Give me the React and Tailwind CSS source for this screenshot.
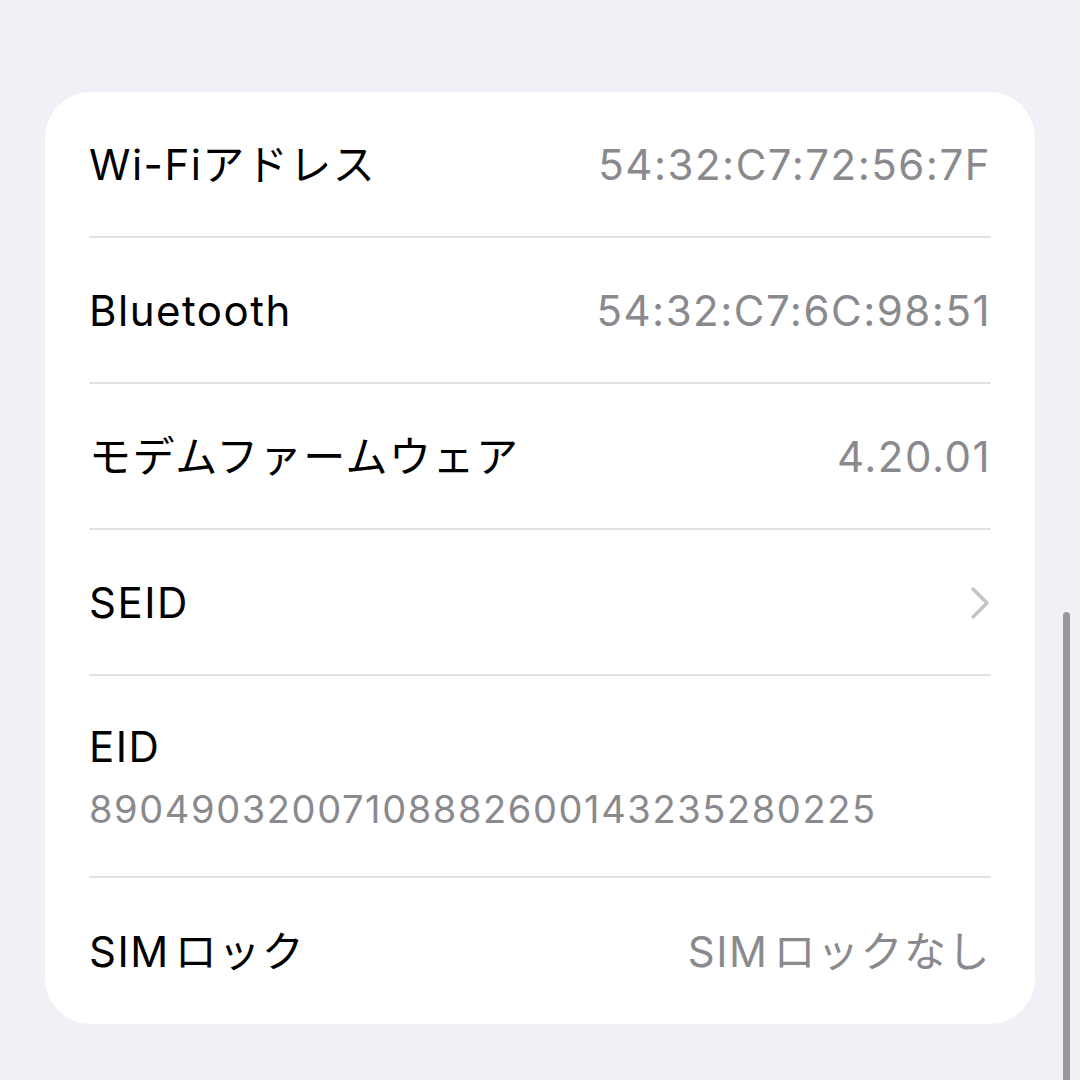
const rows = [
  { label: "Wi-Fiアドレス", value: "54:32:C7:72:56:7F" },
  { label: "Bluetooth", value: "54:32:C7:6C:98:51" },
  { label: "モデムファームウェア", value: "4.20.01" },
  { label: "SEID", chevron: true },
  { label: "EID", sub: "89049032007108882600143235280225" },
  { label: "SIMロック", value: "SIMロックなし" },
];

const withGap = (text) => {
  const m = text.match(/^(SIM)(.*)$/);
  if (!m) return text;
  return (
    <>
      {m[1]}
      <span className="ml-[5px]">{m[2]}</span>
    </>
  );
};

const Chevron = () => (
  <svg width="22" height="36" viewBox="0 0 22 36" fill="none">
    <path
      d="M4 4 L18 18 L4 32"
      stroke="#c4c4c7"
      strokeWidth="3.5"
      strokeLinecap="round"
      strokeLinejoin="round"
    />
  </svg>
);

export default function App() {
  return (
    <div
      className="relative w-[1080px] h-[1080px] overflow-hidden bg-[#f1f0f6] pt-[92px] pl-[45px] pr-[45px]"
      style={{ fontFamily: '"Inter", "Noto Sans CJK JP", sans-serif' }}
    >
      <div className="bg-white rounded-[46px] px-[44px] h-[932px]">
        {rows.map((row, i) => (
          <div
            key={row.label}
            className={
              (row.sub ? "h-[202px] " : "h-[146px] ") +
              (i < rows.length - 1 ? "border-b-2 border-[#e2e2e5] " : "") +
              "flex items-center justify-between pt-[1px]"
            }
          >
            {row.sub ? (
              <div className="flex flex-col">
                <span className="text-[42px] leading-[48px] tracking-[1.5px] text-black">
                  {row.label}
                </span>
                <span className="text-[38px] leading-[44px] tracking-[1.6px] text-[#8a8a8e] mt-[16px]">
                  {row.sub}
                </span>
              </div>
            ) : (
              <span className="text-[42px] tracking-[1.5px] text-black">
                {withGap(row.label)}
              </span>
            )}
            {row.value && (
              <span className="text-[42px] tracking-[1.5px] text-[#8a8a8e]">
                {withGap(row.value)}
              </span>
            )}
            {row.chevron && <Chevron />}
          </div>
        ))}
      </div>
      <div className="absolute left-[1063px] top-[612px] w-[7px] h-[480px] rounded-full bg-[#98989e]" />
    </div>
  );
}
